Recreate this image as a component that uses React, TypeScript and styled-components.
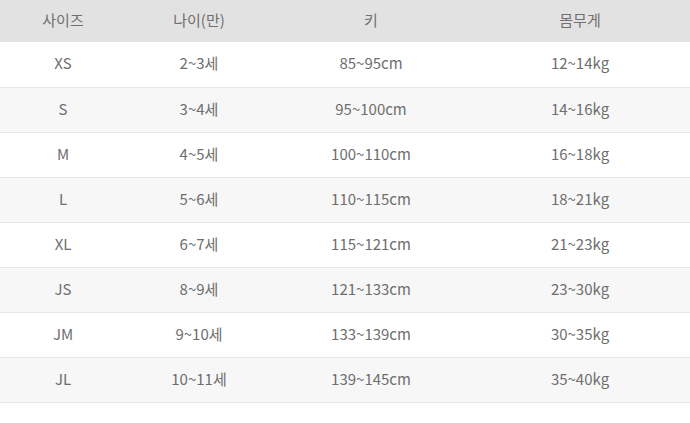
import React from 'react'
import styled, { createGlobalStyle } from 'styled-components'

const GlobalStyle = createGlobalStyle`
    html, body {
        margin: 0;
        padding: 0;
        background: #ffffff;
    }
    body {
        font-family: 'Noto Sans CJK KR', 'Noto Sans', sans-serif;
    }
`

const Table = styled.table`
    width: 690px;
    border-collapse: collapse;
    table-layout: fixed;
    font-size: 15px;
    color: #6e6e6e;
`

const HeadRow = styled.tr`
    height: 42px;
    background: #e2e2e2;
`

const HeadCell = styled.th<{ $width: number }>`
    width: ${(p) => p.$width}px;
    padding: 0 0 4px;
    font-weight: 400;
    text-align: center;
    color: #707070;
`

const Row = styled.tr<{ $shaded: boolean }>`
    height: 45px;
    background: ${(p) => (p.$shaded ? '#f7f7f7' : '#ffffff')};
    border-bottom: 1px solid #e6e6e6;
`

const Cell = styled.td`
    padding: 0 0 3px;
    text-align: center;
`

const columns = [
    { label: '사이즈', width: 126 },
    { label: '나이(만)', width: 146 },
    { label: '키', width: 198 },
    { label: '몸무게', width: 220 },
]

const sizes = [
    ['XS', '2~3세', '85~95cm', '12~14kg'],
    ['S', '3~4세', '95~100cm', '14~16kg'],
    ['M', '4~5세', '100~110cm', '16~18kg'],
    ['L', '5~6세', '110~115cm', '18~21kg'],
    ['XL', '6~7세', '115~121cm', '21~23kg'],
    ['JS', '8~9세', '121~133cm', '23~30kg'],
    ['JM', '9~10세', '133~139cm', '30~35kg'],
    ['JL', '10~11세', '139~145cm', '35~40kg'],
]

export default function App() {
    return (
        <>
            <GlobalStyle />
            <Table>
                <thead>
                    <HeadRow>
                        {columns.map((c) => (
                            <HeadCell key={c.label} $width={c.width}>
                                {c.label}
                            </HeadCell>
                        ))}
                    </HeadRow>
                </thead>
                <tbody>
                    {sizes.map((row, i) => (
                        <Row key={row[0]} $shaded={i % 2 === 1}>
                            {row.map((value, j) => (
                                <Cell key={j}>{value}</Cell>
                            ))}
                        </Row>
                    ))}
                </tbody>
            </Table>
        </>
    )
}
